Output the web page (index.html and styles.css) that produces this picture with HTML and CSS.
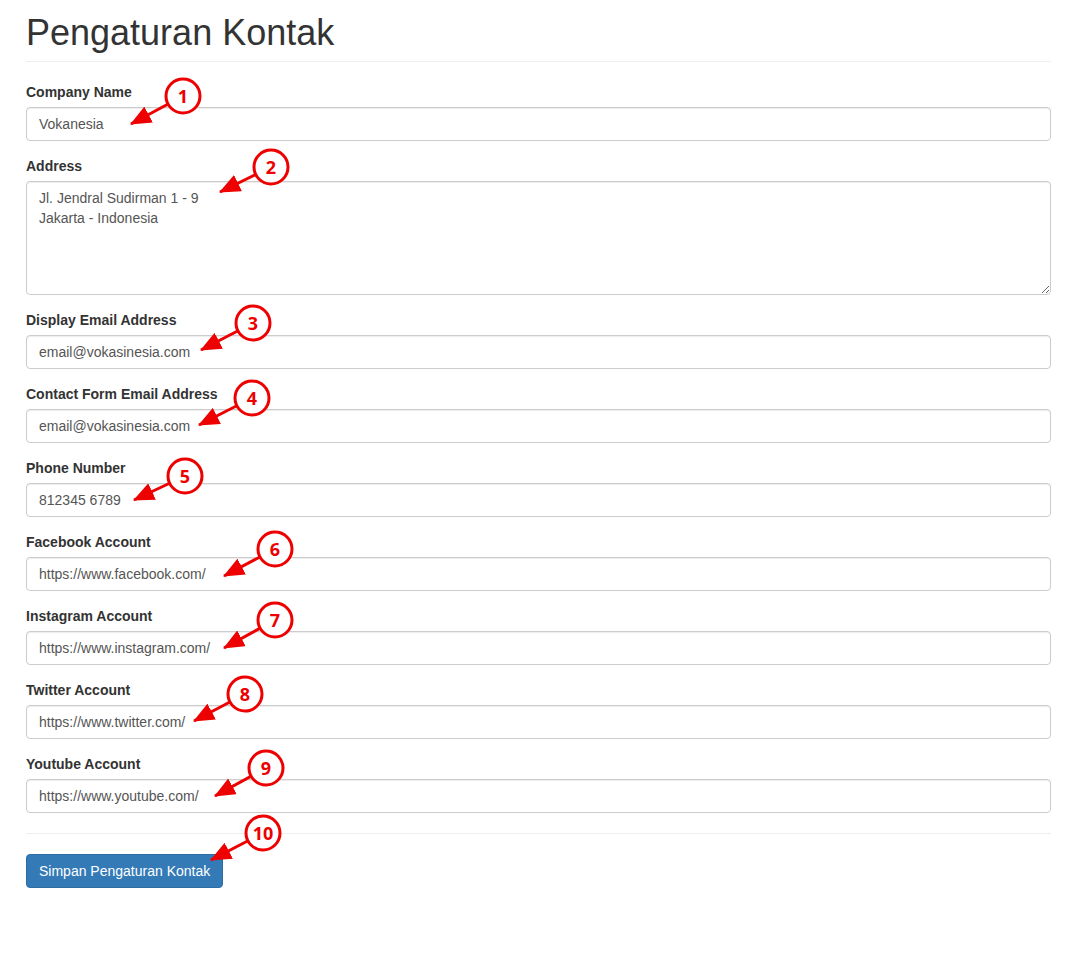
FILE: index.html
```html
<!DOCTYPE html>
<html lang="id">
<head>
<meta charset="utf-8">
<title>Pengaturan Kontak</title>
<link rel="stylesheet" href="styles.css">
</head>
<body>
<div class="container">
  <h1 class="page-title">Pengaturan Kontak</h1>
  <hr class="divider">
  <form class="form">
    <div class="form-group">
      <label class="label">Company Name</label>
      <input class="control" type="text" value="Vokanesia">
    </div>
    <div class="form-group">
      <label class="label">Address</label>
      <textarea class="control textarea" rows="5">Jl. Jendral Sudirman 1 - 9
Jakarta - Indonesia</textarea>
    </div>
    <div class="form-group">
      <label class="label">Display Email Address</label>
      <input class="control" type="text" value="email@vokasinesia.com">
    </div>
    <div class="form-group">
      <label class="label">Contact Form Email Address</label>
      <input class="control" type="text" value="email@vokasinesia.com">
    </div>
    <div class="form-group">
      <label class="label">Phone Number</label>
      <input class="control" type="text" value="812345 6789">
    </div>
    <div class="form-group">
      <label class="label">Facebook Account</label>
      <input class="control" type="text" value="https://www.facebook.com/">
    </div>
    <div class="form-group">
      <label class="label">Instagram Account</label>
      <input class="control" type="text" value="https://www.instagram.com/">
    </div>
    <div class="form-group">
      <label class="label">Twitter Account</label>
      <input class="control" type="text" value="https://www.twitter.com/">
    </div>
    <div class="form-group">
      <label class="label">Youtube Account</label>
      <input class="control" type="text" value="https://www.youtube.com/">
    </div>
    <hr class="divider divider-bottom">
    <button class="btn-primary" type="button">Simpan Pengaturan Kontak</button>
  </form>
</div>

<svg class="annotations" width="1076" height="958" viewBox="0 0 1076 958" xmlns="http://www.w3.org/2000/svg">
  <defs>
    <marker id="ah" markerUnits="userSpaceOnUse" markerWidth="21" markerHeight="18" refX="20" refY="9" orient="auto">
      <path d="M0,0 L21,9 L0,18 Z" fill="#ee0000"/>
    </marker>
  </defs>
  <g stroke="#ee0000" stroke-width="3" fill="none">
    <line x1="183" y1="96" x2="131" y2="124" marker-end="url(#ah)"/>
    <line x1="271" y1="167" x2="220" y2="192" marker-end="url(#ah)"/>
    <line x1="253" y1="323" x2="201" y2="350" marker-end="url(#ah)"/>
    <line x1="252" y1="398" x2="199" y2="425" marker-end="url(#ah)"/>
    <line x1="185" y1="476" x2="134" y2="500" marker-end="url(#ah)"/>
    <line x1="275" y1="549" x2="224" y2="576" marker-end="url(#ah)"/>
    <line x1="275" y1="620" x2="224" y2="648" marker-end="url(#ah)"/>
    <line x1="245" y1="694" x2="194" y2="721" marker-end="url(#ah)"/>
    <line x1="266" y1="768" x2="215" y2="796" marker-end="url(#ah)"/>
    <line x1="263" y1="833" x2="211" y2="860" marker-end="url(#ah)"/>
  </g>
  <g stroke="#ee0000" stroke-width="3" fill="#ffffff">
    <circle cx="183" cy="96" r="17"/>
    <circle cx="271" cy="167" r="17"/>
    <circle cx="253" cy="323" r="17"/>
    <circle cx="252" cy="398" r="17"/>
    <circle cx="185" cy="476" r="17"/>
    <circle cx="275" cy="549" r="17"/>
    <circle cx="275" cy="620" r="17"/>
    <circle cx="245" cy="694" r="17"/>
    <circle cx="266" cy="768" r="17"/>
    <circle cx="263" cy="833" r="17"/>
  </g>
  <g class="num" fill="#ee0000" text-anchor="middle">
    <text x="183" y="103">1</text>
    <text x="271" y="174">2</text>
    <text x="253" y="330">3</text>
    <text x="252" y="405">4</text>
    <text x="185" y="483">5</text>
    <text x="275" y="556">6</text>
    <text x="275" y="627">7</text>
    <text x="245" y="701">8</text>
    <text x="266" y="775">9</text>
    <text x="263" y="840">10</text>
  </g>
</svg>
</body>
</html>
```

FILE: styles.css
```css
* {
  box-sizing: border-box;
}

html, body {
  margin: 0;
  padding: 0;
  background: #ffffff;
}

body {
  position: relative;
  font-family: "Liberation Sans", Arial, Helvetica, sans-serif;
  font-size: 14px;
  line-height: 20px;
  color: #333333;
}

.container {
  padding: 0 25px 0 26px;
}

.page-title {
  margin: 13px 0 8px;
  font-size: 36px;
  font-weight: 400;
  line-height: 1.1;
  color: #333333;
}

.divider {
  margin: 0 0 20px;
  border: 0;
  border-top: 1px solid #eeeeee;
  height: 0;
}

.divider-bottom {
  margin-top: 20px;
}

.form {
  margin: 0;
}

.form-group {
  margin-bottom: 15px;
}

.label {
  display: block;
  margin-bottom: 5px;
  font-weight: 700;
  color: #333333;
}

.control {
  display: block;
  width: 100%;
  height: 34px;
  padding: 6px 12px;
  font-family: "Liberation Sans", Arial, Helvetica, sans-serif;
  font-size: 14px;
  line-height: 20px;
  color: #555555;
  background: #ffffff;
  border: 1px solid #cccccc;
  border-radius: 4px;
  box-shadow: inset 0 1px 1px rgba(0, 0, 0, 0.075);
  outline: none;
  margin: 0;
}

.textarea {
  height: 114px;
  resize: vertical;
}

.btn-primary {
  display: inline-block;
  padding: 6px 12px;
  margin: 0;
  font-family: "Liberation Sans", Arial, Helvetica, sans-serif;
  font-size: 14px;
  line-height: 20px;
  color: #ffffff;
  background: #337ab7;
  border: 1px solid #2e6da4;
  border-radius: 4px;
  cursor: pointer;
}

.annotations {
  position: absolute;
  top: 0;
  left: 0;
  pointer-events: none;
}

.num {
  font-family: "Open Sans", "DejaVu Sans", sans-serif;
  font-weight: 700;
  font-size: 18px;
}
```
